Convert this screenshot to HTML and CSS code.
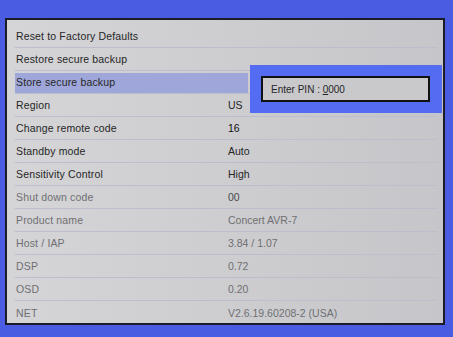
FILE: index.html
```html
<!DOCTYPE html>
<html lang="en">
<head>
    <meta charset="UTF-8">
    <title>Setup Menu</title>
    <link rel="stylesheet" href="styles.css">
</head>
<body>

<div class="screen">
    <div class="menu">
        <div class="row"><span class="label">Reset to Factory Defaults</span><span class="value"></span></div>
        <div class="row"><span class="label">Restore secure backup</span><span class="value"></span></div>
        <div class="row selected"><span class="label">Store secure backup</span><span class="value"></span></div>
        <div class="row"><span class="label">Region</span><span class="value">US</span></div>
        <div class="row"><span class="label">Change remote code</span><span class="value strong">16</span></div>
        <div class="row"><span class="label">Standby mode</span><span class="value">Auto</span></div>
        <div class="row"><span class="label">Sensitivity Control</span><span class="value">High</span></div>
        <div class="row info"><span class="label">Shut down code</span><span class="value dim">00</span></div>
        <div class="row info"><span class="label">Product name</span><span class="value">Concert AVR-7</span></div>
        <div class="row info"><span class="label">Host / IAP</span><span class="value">3.84 / 1.07</span></div>
        <div class="row info"><span class="label">DSP</span><span class="value">0.72</span></div>
        <div class="row info"><span class="label">OSD</span><span class="value">0.20</span></div>
        <div class="row info last"><span class="label">NET</span><span class="value">V2.6.19.60208-2 (USA)</span></div>

        <div class="pin-popup">
            <div class="pin-box">Enter PIN : <u>0</u>000</div>
        </div>
    </div>
</div>

</body>
</html>
```

FILE: styles.css
```css
body {
    margin: 0;
    padding: 0;
    background-color: #4a5de2;
    font-family: "Liberation Sans", Arial, sans-serif;
    font-size: 10.5px;
}

.screen {
    width: 453px;
    height: 337px;
    padding: 18px 0 0 5px;
    box-sizing: border-box;
}

.menu {
    position: relative;
    width: 440px;
    height: 307px;
    box-sizing: border-box;
    padding: 5px 6px 0 8px;
    border: 2px solid #1c1c28;
    background: linear-gradient(90deg, #d5d5d7, #c6c6ca);
}

.row {
    display: flex;
    align-items: center;
    height: 23px;
    box-sizing: border-box;
    border-bottom: 1px solid #bdbdcc;
    color: #262626;
}

.row.last {
    border-bottom: none;
}

.row.selected {
    background: linear-gradient(#9fa7da, #9fa7da) no-repeat 0 2px / 233px 21px;
}

.row .label {
    width: 212px;
    padding-left: 1px;
    letter-spacing: 0.15px;
}

.row .value.strong {
    color: #111;
}

.row.info {
    color: #6f6f72;
}

.row .value.dim {
    color: #4a4a4c;
}

.pin-popup {
    position: absolute;
    left: 243px;
    top: 45px;
    width: 192px;
    height: 48px;
    box-sizing: border-box;
    padding: 11px 11px 0 11px;
    background-color: #546cf2;
}

.pin-box {
    width: 169px;
    height: 26px;
    box-sizing: border-box;
    border: 2px solid #111;
    background-color: #c9c9cc;
    color: #262626;
    padding-left: 8px;
    line-height: 24px;
    font-size: 10px;
}
```
